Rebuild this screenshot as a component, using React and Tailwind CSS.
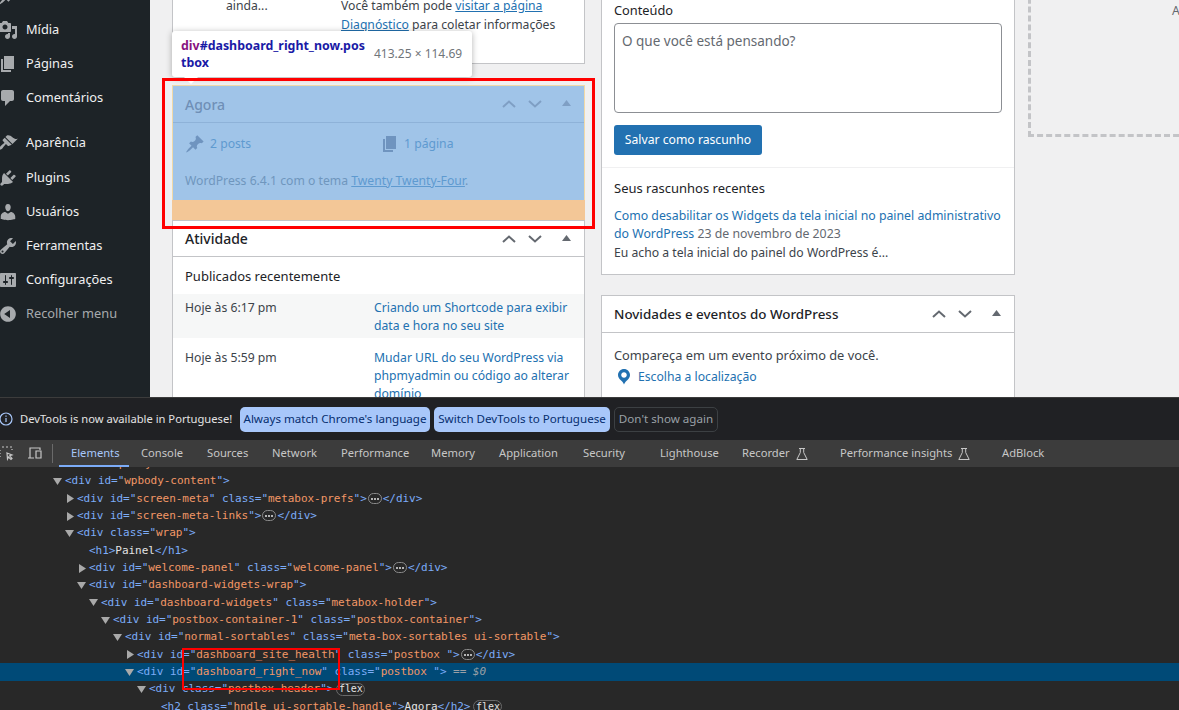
import React from "react";

const paths = {
  post: "M10.44 3.02l1.82-1.82 6.36 6.35-1.83 1.82c-1.05-.68-2.48-.57-3.41.36l-.75.75c-.92.93-1.04 2.35-.35 3.41l-1.83 1.82-2.41-2.41-2.8 2.79c-.42.42-3.38 2.71-3.8 2.29s1.86-3.39 2.28-3.81l2.79-2.79L4.1 9.36l1.83-1.82c1.05.69 2.48.57 3.4-.36l.75-.75c.93-.92 1.05-2.35.36-3.41z",
  media: "M13 11V4c0-.55-.45-1-1-1h-1.67L9 1H5L3.67 3H2c-.55 0-1 .45-1 1v7c0 .55.45 1 1 1h10c.55 0 1-.45 1-1zM7 4.5c1.38 0 2.5 1.12 2.5 2.5S8.38 9.5 7 9.5 4.5 8.38 4.5 7 5.62 4.5 7 4.5zM14 6h5v10.5c0 1.38-1.12 2.5-2.5 2.5S14 17.88 14 16.5s1.12-2.5 2.5-2.5c.17 0 .34.02.5.05V9h-3V6zm-4 8.05V13h2v3.5c0 1.38-1.12 2.5-2.5 2.5S7 17.88 7 16.5 8.12 14 9.5 14c.17 0 .34.02.5.05z",
  page: "M6 15V2h10v13H6zm-1 1h8v2H3V5h2v11z",
  comments: "M5 2h9c1.1 0 2 .9 2 2v7c0 1.1-.9 2-2 2h-2l-5 5v-5H5c-1.1 0-2-.9-2-2V4c0-1.1.9-2 2-2z",
  appearance: "M14.48 11.06L7.41 3.99l1.5-1.5c.5-.56 2.3-.47 3.51.32 1.21.8 1.43 1.28 2.91 2.1 1.18.64 2.45 1.26 4.45.85zm-.71.71L6.7 4.7 4.93 6.47c-.39.39-.39 1.02 0 1.41l1.06 1.06c.39.39.39 1.03 0 1.42-.6.6-1.43 1.11-2.21 1.69-.35.26-.7.53-1.01.84-1.34 1.34-2.37 2.95-1.67 3.65.71.7 2.31-.32 3.65-1.66.31-.31.58-.66.84-1.01.58-.78 1.09-1.61 1.69-2.21.39-.39 1.02-.39 1.41 0l1.06 1.06c.39.39 1.02.39 1.41 0z",
  plugins: "M13.11 4.36L9.87 7.6 8 5.73l3.24-3.24c.35-.34 1.05-.2 1.56.32.52.51.66 1.21.31 1.55zm-8 1.77l.91-1.12 9.01 9.01-1.19.84c-.71.71-2.63 1.16-3.82 1.16H6.14L4.9 17.26c-.59.59-1.54.59-2.12 0-.59-.58-.59-1.53 0-2.12l1.24-1.24v-3.88c0-1.13.4-3.19 1.09-3.89zm7.26 3.97l3.24-3.24c.34-.35 1.04-.21 1.55.31.52.51.66 1.21.31 1.55l-3.24 3.25z",
  users: "M10 9.25c-2.27 0-2.73-3.44-2.73-3.44C7 4.02 7.82 2 9.97 2c2.16 0 2.98 2.02 2.71 3.81 0 0-.41 3.44-2.68 3.44zm0 2.57L12.72 10c2.39 0 4.52 2.33 4.52 4.53v2.49s-3.65 1.13-7.24 1.13c-3.65 0-7.24-1.13-7.24-1.13v-2.49c0-2.25 1.94-4.48 4.47-4.48z",
  tools: "M16.68 9.77c-1.34 1.34-3.3 1.67-4.95.99l-5.41 6.52c-.99.99-2.59.99-3.58 0s-.99-2.59 0-3.57l6.52-5.42c-.68-1.65-.35-3.61.99-4.95 1.28-1.28 3.12-1.62 4.72-1.06l-2.89 2.89 2.82 2.82 2.86-2.87c.53 1.58.18 3.39-1.08 4.65zM3.81 16.21c.4.39 1.04.39 1.43 0 .4-.4.4-1.04 0-1.43-.39-.4-1.03-.4-1.43 0-.39.39-.39 1.03 0 1.43z",
  settings: "M18 16V4c0-.55-.45-1-1-1H3c-.55 0-1 .45-1 1v12c0 .55.45 1 1 1h14c.55 0 1-.45 1-1zM8 11h1c.55 0 1 .45 1 1s-.45 1-1 1H8v1.5c0 .28-.22.5-.5.5s-.5-.22-.5-.5V13H6c-.55 0-1-.45-1-1s.45-1 1-1h1V5.5c0-.28.22-.5.5-.5s.5.22.5.5V11zm5-2h-1c-.55 0-1-.45-1-1s.45-1 1-1h1V5.5c0-.28.22-.5.5-.5s.5.22.5.5V7h1c.55 0 1 .45 1 1s-.45 1-1 1h-1v5.5c0 .28-.22.5-.5.5s-.5-.22-.5-.5V9z",
  collapse: "M10 2.16c4.33 0 7.84 3.51 7.84 7.84s-3.51 7.84-7.84 7.84S2.16 14.33 2.16 10 5.71 2.16 10 2.16zm2 11.72V6.12L6.18 9.97z",
  location: "M10 2C6.69 2 4 4.69 4 8c0 2.02 1.17 3.71 2.53 4.89.43.37 1.18.96 1.85 1.83.74.97 1.41 2.01 1.62 2.71.21-.7.88-1.74 1.62-2.71.67-.87 1.42-1.46 1.85-1.83C14.83 11.71 16 10.02 16 8c0-3.31-2.69-6-6-6zm0 3.2c1.55 0 2.8 1.25 2.8 2.8s-1.25 2.8-2.8 2.8S7.2 9.55 7.2 8 8.45 5.2 10 5.2z",
};

function Dash({ name, className }) {
  return (
    <svg viewBox="0 0 20 20" className={className} fill="currentColor">
      <path d={paths[name]} />
    </svg>
  );
}

function MenuRow({ icon, label, dim, extra }) {
  return (
    <div className={`flex items-center gap-2 pl-0 -ml-[2px] text-[12.8px] ${extra || "h-[34px]"}`}>
      <Dash name={icon} className="h-5 w-5 shrink-0 text-[#a7aaad]" />
      <span className={dim ? "text-[#a7aaad]" : "text-[#f0f0f1]"}>{label}</span>
    </div>
  );
}

function Controls({ tone }) {
  return (
    <div className={`flex h-full items-center ${tone}`}>
      <div className="flex w-[26px] justify-center">
        <svg width="14" height="8" viewBox="0 0 14 8" fill="none" stroke="currentColor" strokeWidth="2">
          <path d="M1 7l6-5.5L13 7" />
        </svg>
      </div>
      <div className="flex w-[26px] justify-center">
        <svg width="14" height="8" viewBox="0 0 14 8" fill="none" stroke="currentColor" strokeWidth="2">
          <path d="M1 1l6 5.5L13 1" />
        </svg>
      </div>
      <div className="flex w-[36px] justify-center pb-[2px]">
        <svg width="9" height="6" viewBox="0 0 9 6" fill="currentColor">
          <path d="M4.5 0L9 6H0z" />
        </svg>
      </div>
    </div>
  );
}

function BoxHeader({ title, heightClass, titleSize }) {
  return (
    <div className={`flex items-center justify-between border-b border-[#c3c4c7] pl-3 ${heightClass}`}>
      <span className={`font-medium text-[#1d2327] ${titleSize}`}>{title}</span>
      <Controls tone="text-[#646970]" />
    </div>
  );
}

const Tag = ({ children }) => <span className="text-[#7cacf8]">{children}</span>;
const Val = ({ children }) => <span className="text-[#f29766]">{children}</span>;
const Attr = ({ n, v }) => (
  <>
    {" "}
    <Tag>{n}=&quot;</Tag>
    <Val>{v}</Val>
    <Tag>&quot;</Tag>
  </>
);
const Dots = () => (
  <span className="mx-[1px] inline-flex h-[11px] w-[14px] items-center justify-center gap-[1px] rounded-full border border-[#8a8a8a] align-middle">
    <span className="h-[2px] w-[2px] rounded-full bg-[#e3e3e3]" />
    <span className="h-[2px] w-[2px] rounded-full bg-[#e3e3e3]" />
    <span className="h-[2px] w-[2px] rounded-full bg-[#e3e3e3]" />
  </span>
);
const Flex = () => (
  <span className="ml-[3px] inline-flex h-[13px] w-[29px] items-center justify-center rounded-full border border-[#6a6a6a] align-middle text-[10px] leading-none text-[#e3e3e3]">
    flex
  </span>
);

function Node({ indent, arrow, selected, children }) {
  return (
    <div className={`flex h-[17.33px] items-center whitespace-pre ${indent} ${selected ? "bg-[#004a77]" : ""}`}>
      <span className="flex w-[12px] shrink-0 justify-start">
        {arrow === "down" && (
          <svg width="9" height="7" viewBox="0 0 9 7" fill="#a9a9a9"><path d="M0 0h9L4.5 7z" /></svg>
        )}
        {arrow === "right" && (
          <svg width="7" height="9" viewBox="0 0 7 9" fill="#a9a9a9" className="ml-[2px]"><path d="M0 0l7 4.5L0 9z" /></svg>
        )}
      </span>
      <span>{children}</span>
    </div>
  );
}

const Flask = () => (
  <svg width="14" height="14" viewBox="0 0 14 14" fill="none" stroke="#c7c7c7" strokeWidth="1" className="ml-[5px]">
    <path d="M4 1.5h6M5.3 1.5v4L1.8 12.5h10.4L8.7 5.5v-4" />
  </svg>
);

const tabs = [
  { t: "Elements", w: "w-[70px]", active: true },
  { t: "Console", w: "w-[66px]" },
  { t: "Sources", w: "w-[65px]" },
  { t: "Network", w: "w-[69px]" },
  { t: "Performance", w: "w-[90px]" },
  { t: "Memory", w: "w-[68px]" },
  { t: "Application", w: "w-[84px]" },
  { t: "Security", w: "w-[77px]" },
  { t: "Lighthouse", w: "w-[82px]" },
  { t: "Recorder", w: "w-[98px]", flask: true },
  { t: "Performance insights", w: "w-[162px]", flask: true },
  { t: "AdBlock", w: "w-[70px]" },
];

export default function App() {
  return (
    <div className="relative flex h-[710px] w-[1179px] flex-col overflow-hidden font-['Noto_Sans',sans-serif] text-[12.2px] text-[#3c434a]">
      {/* Page */}
      <div className="flex h-[397px] shrink-0 overflow-hidden bg-[#f0f0f1]">
        <aside className="-mt-[21px] w-[150px] shrink-0 bg-[#1d2327]">
          <MenuRow icon="post" label="" />
          <MenuRow icon="media" label="Mídia" />
          <MenuRow icon="page" label="Páginas" />
          <MenuRow icon="comments" label="Comentários" extra="h-[34px] mb-[10px]" />
          <MenuRow icon="appearance" label="Aparência" extra="h-[36px]" />
          <MenuRow icon="plugins" label="Plugins" />
          <MenuRow icon="users" label="Usuários" />
          <MenuRow icon="tools" label="Ferramentas" />
          <MenuRow icon="settings" label="Configurações" />
          <MenuRow icon="collapse" label="Recolher menu" dim />
        </aside>

        <main className="flex min-w-0 flex-1 items-start pl-[22px]">
          {/* column 1 */}
          <div className="w-[413px] shrink-0">
            <div className="h-[64px] border border-t-0 border-[#c3c4c7] bg-white">
              <div className="flex leading-[18.5px]">
                <div className="w-[168px] shrink-0 pl-[53px] -mt-[3px]">ainda...</div>
                <div className="-mt-[3px] whitespace-nowrap">
                  <div>Você também pode <span className="text-[#2271b1] underline">visitar a página</span></div>
                  <div><span className="text-[#2271b1] underline">Diagnóstico</span> para coletar informações</div>
                </div>
              </div>
            </div>

            <div className="mt-[21px] bg-[#f3c797] pb-[20px]">
              <div className="border border-b-0 border-[#f0d9a8] bg-[#a0c4e8]">
                <div className="flex h-[37px] items-center justify-between border-b border-[#8eb2d8] pl-3">
                  <span className="text-[14px] font-medium text-[#6f8fb6]">Agora</span>
                  <Controls tone="text-[#7f9fc4]" />
                </div>
                <div className="flex h-[41px] items-center pl-3 pt-[1px]">
                  <div className="flex w-[195px] items-center gap-[5px]">
                    <Dash name="post" className="h-5 w-5 text-[#6f94bf]" />
                    <span className="text-[#5e9ad0]">2 posts</span>
                  </div>
                  <div className="flex items-center gap-[4px]">
                    <Dash name="page" className="h-5 w-5 text-[#6f94bf]" />
                    <span className="text-[#5e9ad0]">1 página</span>
                  </div>
                </div>
                <div className="flex h-[36px] items-start pl-3 pt-[8px] text-[#6f96bd]">
                  <span>WordPress 6.4.1 com o tema <span className="text-[#5e9ad0] underline">Twenty Twenty-Four</span>.</span>
                </div>
              </div>
            </div>

            <div className="border border-[#c3c4c7] bg-white">
              <BoxHeader title="Atividade" heightClass="h-[36px]" titleSize="text-[14px]" />
              <div className="flex h-[37px] items-center pl-3 pt-[2px] text-[13px] text-[#1d2327]">Publicados recentemente</div>
              <div className="flex h-[44px] bg-[#f6f7f7] pl-3 pt-[5px] leading-[18px]">
                <span className="w-[189px] shrink-0">Hoje às 6:17 pm</span>
                <span className="text-[#2271b1]">Criando um Shortcode para exibir<br />data e hora no seu site</span>
              </div>
              <div className="flex pl-3 pt-[11px] leading-[18px]">
                <span className="w-[189px] shrink-0">Hoje às 5:59 pm</span>
                <span className="text-[#2271b1]">Mudar URL do seu WordPress via<br />phpmyadmin ou código ao alterar<br />domínio</span>
              </div>
            </div>
          </div>

          {/* column 2 */}
          <div className="ml-4 w-[414px] shrink-0">
            <div className="h-[275px] border border-t-0 border-[#c3c4c7] bg-white">
              <div className="px-3">
                <div className="flex h-[23px] items-center pb-[1px] text-[12.8px] text-[#1d2327]">Conteúdo</div>
                <div className="h-[90px] w-[388px] rounded-[4px] border border-[#8c8f94] pl-[7px] pt-[7px] text-[13.5px] text-[#646970]">O que você está pensando?</div>
                <div className="mt-3 flex h-[30px] w-[148px] items-center justify-center rounded-[3px] bg-[#2271b1] text-white">Salvar como rascunho</div>
              </div>
              <div className="mt-3 border-t border-[#f0f0f1] px-3">
                <div className="mt-[11px] text-[13px] text-[#1d2327]">Seus rascunhos recentes</div>
                <div className="mt-[8px] text-[12.3px] leading-[18.5px]">
                  <span className="text-[#2271b1]">Como desabilitar os Widgets da tela inicial no painel administrativo do WordPress</span> <span className="text-[#646970]">23 de novembro de 2023</span>
                </div>
                <div className="leading-[18.5px]">Eu acho a tela inicial do painel do WordPress é...</div>
              </div>
            </div>

            <div className="mt-5 h-[130px] border border-[#c3c4c7] bg-white">
              <BoxHeader title="Novidades e eventos do WordPress" heightClass="h-[37px]" titleSize="text-[13.4px] pt-[1px]" />
              <div className="px-3 pt-[13px] text-[12.8px] text-[#3c434a]">Compareça em um evento próximo de você.</div>
              <div className="mt-[2px] flex items-center gap-[4px] pl-3 text-[#2271b1]">
                <Dash name="location" className="h-5 w-5 text-[#2271b1]" />
                <span>Escolha a localização</span>
              </div>
            </div>
          </div>

          {/* column 3 */}
          <div className="ml-[13px] h-[237px] w-[414px] shrink-0 -translate-y-[100px] border-[3px] border-dashed border-[#c3c4c7] pl-[141px] pt-[99px] text-[#646970]">
            <span className="whitespace-nowrap">Arraste as caixas para cá</span>
          </div>
        </main>
      </div>

      {/* DevTools */}
      <div className="flex min-h-0 flex-1 flex-col bg-[#282828] text-[11.6px]">
        <div className="relative z-10 flex h-[43px] shrink-0 items-center border-t border-[#3c3c3c] bg-[#202124] text-[#e3e3e3]">
          <svg width="14" height="14" viewBox="0 0 14 14" className="-ml-[1px] shrink-0" fill="none" stroke="#a8c7fa" strokeWidth="1.2">
            <circle cx="7" cy="7" r="6" />
            <path d="M7 6v4M7 3.6v1.2" />
          </svg>
          <span className="ml-[7px] w-[220px] shrink-0 whitespace-nowrap text-[11.2px]">DevTools is now available in Portuguese!</span>
          <div className="flex h-[25px] w-[190px] items-center justify-center whitespace-nowrap rounded-[5px] bg-[#a8c7fa] text-[#062e6f]">Always match Chrome&apos;s language</div>
          <div className="ml-1 flex h-[25px] w-[176px] items-center justify-center whitespace-nowrap rounded-[5px] bg-[#a8c7fa] text-[#062e6f]">Switch DevTools to Portuguese</div>
          <div className="ml-1 flex h-[25px] w-[104px] items-center justify-center whitespace-nowrap rounded-[5px] border border-[#3c4043] text-[#9aa0a6]">Don&apos;t show again</div>
        </div>

        <div className="relative z-10 flex h-[27px] shrink-0 items-stretch bg-[#3c3c3c] text-[11.2px] text-[#c7c7c7]">
          <svg width="16" height="16" viewBox="0 0 16 16" className="-ml-[2px] mt-[5px] shrink-0" fill="none" stroke="#c7c7c7" strokeWidth="1.2">
            <path d="M1 2h1M4 2h2M8 2h2M12 2h2M14 4v1M2 5v1M2 8v1M2 11v1M9 8l5 2-2.3.8L14 13.5 13 14.5l-2.5-2.5L9.5 14z" />
          </svg>
          <svg width="16" height="16" viewBox="0 0 16 16" className="ml-[13px] mt-[5px] shrink-0" fill="none" stroke="#c7c7c7" strokeWidth="1.2">
            <path d="M7 13H1M3 13V3h10v2M9 6h5v7H9z" />
          </svg>
          <div className="ml-[9px] mt-[4px] h-[19px] w-px bg-[#6a6a6a]" />
          <div className="ml-[6px] flex">
            {tabs.map((t) => (
              <div
                key={t.t}
                className={`flex items-center whitespace-nowrap pl-3 ${t.w} ${t.active ? "border-b-2 border-[#7cacf8] pt-[2px] text-[#a8c7fa]" : ""}`}
              >
                {t.t}
                {t.flask && <Flask />}
              </div>
            ))}
          </div>
        </div>

        <div className="-mt-[11.5px] min-h-0 flex-1 font-['DejaVu_Sans_Mono',monospace] text-[11px] tracking-[-0.04px] text-[#e3e3e3]">
          <Node indent="pl-[41px]">
            <Tag>&lt;div</Tag><Attr n="id" v="wpbody" /><Attr n="role" v="main" /><Tag>&gt;</Tag>
          </Node>
          <Node indent="pl-[53px]" arrow="down">
            <Tag>&lt;div</Tag><Attr n="id" v="wpbody-content" /><Tag>&gt;</Tag>
          </Node>
          <Node indent="pl-[65px]" arrow="right">
            <Tag>&lt;div</Tag><Attr n="id" v="screen-meta" /><Attr n="class" v="metabox-prefs" /><Tag>&gt;</Tag><Dots /><Tag>&lt;/div&gt;</Tag>
          </Node>
          <Node indent="pl-[65px]" arrow="right">
            <Tag>&lt;div</Tag><Attr n="id" v="screen-meta-links" /><Tag>&gt;</Tag><Dots /><Tag>&lt;/div&gt;</Tag>
          </Node>
          <Node indent="pl-[65px]" arrow="down">
            <Tag>&lt;div</Tag><Attr n="class" v="wrap" /><Tag>&gt;</Tag>
          </Node>
          <Node indent="pl-[77px]">
            <Tag>&lt;h1&gt;</Tag>Painel<Tag>&lt;/h1&gt;</Tag>
          </Node>
          <Node indent="pl-[77px]" arrow="right">
            <Tag>&lt;div</Tag><Attr n="id" v="welcome-panel" /><Attr n="class" v="welcome-panel" /><Tag>&gt;</Tag><Dots /><Tag>&lt;/div&gt;</Tag>
          </Node>
          <Node indent="pl-[77px]" arrow="down">
            <Tag>&lt;div</Tag><Attr n="id" v="dashboard-widgets-wrap" /><Tag>&gt;</Tag>
          </Node>
          <Node indent="pl-[89px]" arrow="down">
            <Tag>&lt;div</Tag><Attr n="id" v="dashboard-widgets" /><Attr n="class" v="metabox-holder" /><Tag>&gt;</Tag>
          </Node>
          <Node indent="pl-[101px]" arrow="down">
            <Tag>&lt;div</Tag><Attr n="id" v="postbox-container-1" /><Attr n="class" v="postbox-container" /><Tag>&gt;</Tag>
          </Node>
          <Node indent="pl-[113px]" arrow="down">
            <Tag>&lt;div</Tag><Attr n="id" v="normal-sortables" /><Attr n="class" v="meta-box-sortables ui-sortable" /><Tag>&gt;</Tag>
          </Node>
          <Node indent="pl-[125px]" arrow="right">
            <Tag>&lt;div</Tag><Attr n="id" v="dashboard_site_health" /><Attr n="class" v="postbox " /><Tag>&gt;</Tag><Dots /><Tag>&lt;/div&gt;</Tag>
          </Node>
          <Node indent="pl-[125px]" arrow="down" selected>
            <Tag>&lt;div</Tag><Attr n="id" v="dashboard_right_now" /><Attr n="class" v="postbox " /><Tag>&gt;</Tag>
            <span className="italic text-[#9aa0a6]"> == $0</span>
          </Node>
          <Node indent="pl-[137px]" arrow="down">
            <Tag>&lt;div</Tag><Attr n="class" v="postbox-header" /><Tag>&gt;</Tag><Flex />
          </Node>
          <Node indent="pl-[149px]">
            <Tag>&lt;h2</Tag><Attr n="class" v="hndle ui-sortable-handle" /><Tag>&gt;</Tag>Agora<Tag>&lt;/h2&gt;</Tag><Flex />
          </Node>
        </div>
      </div>

      {/* Overlays */}
      <div className="absolute left-[172px] top-[31px] flex h-[46px] w-[300px] items-center rounded-[3px] bg-white pl-[9px] text-[12.4px] shadow-[0_1px_6px_rgba(0,0,0,0.3)]">
        <div className="w-[193px] shrink-0 whitespace-nowrap font-bold leading-[17px] text-[#1a1aa6]">
          <span className="text-[#881280]">div</span>#dashboard_right_now.pos<br />tbox
        </div>
        <span className="whitespace-nowrap text-[12px] text-[#70757a]">413.25 × 114.69</span>
      </div>
      <div className="absolute left-[184px] top-[77px] h-0 w-0 border-x-[7px] border-t-[7px] border-x-transparent border-t-white" />
      <div className="absolute left-[162px] top-[78px] h-[151px] w-[433px] border-[3px] border-[#ff0000]" />
      <div className="absolute left-[182px] top-[648px] h-[42px] w-[158px] border-2 border-[#ff0000]" />
    </div>
  );
}
